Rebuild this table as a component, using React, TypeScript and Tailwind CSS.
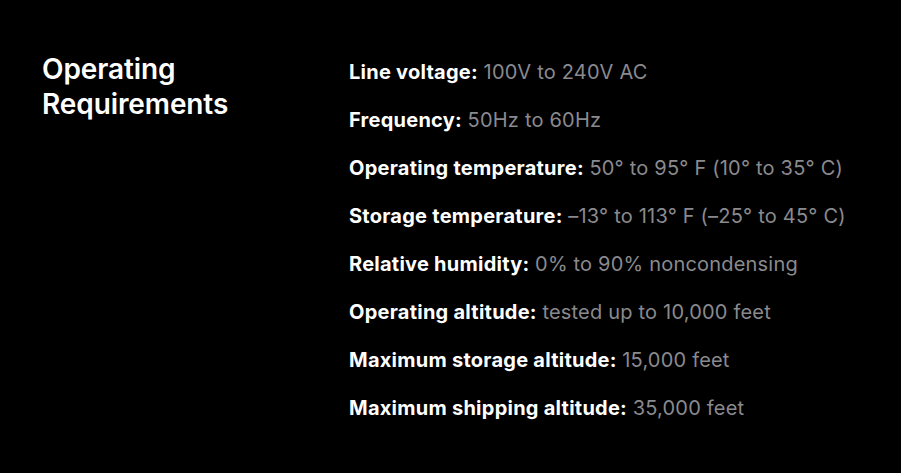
const specs: [string, string][] = [
  ["Line voltage:", "100V to 240V AC"],
  ["Frequency:", "50Hz to 60Hz"],
  ["Operating temperature:", "50° to 95° F (10° to 35° C)"],
  ["Storage temperature:", "–13° to 113° F (–25° to 45° C)"],
  ["Relative humidity:", "0% to 90% noncondensing"],
  ["Operating altitude:", "tested up to 10,000 feet"],
  ["Maximum storage altitude:", "15,000 feet"],
  ["Maximum shipping altitude:", "35,000 feet"],
];

export default function App() {
  return (
    <div className="w-[901px] h-[473px] bg-black flex font-['Inter',sans-serif] antialiased">
      <div className="w-[349px] pl-[42px] pt-[52px]">
        <h2 className="text-white font-semibold text-[28px] leading-[35px] tracking-[-0.1px]">
          Operating
          <br />
          Requirements
        </h2>
      </div>
      <ul className="pt-[58px] flex flex-col gap-[20px]">
        {specs.map(([label, value]) => (
          <li key={label} className="text-[20px] leading-[28px]">
            <span className="text-white font-bold tracking-[0.25px]">{label}</span>{" "}
            <span className="text-[#8a8a8e] tracking-[0.2px]">{value}</span>
          </li>
        ))}
      </ul>
    </div>
  );
}
